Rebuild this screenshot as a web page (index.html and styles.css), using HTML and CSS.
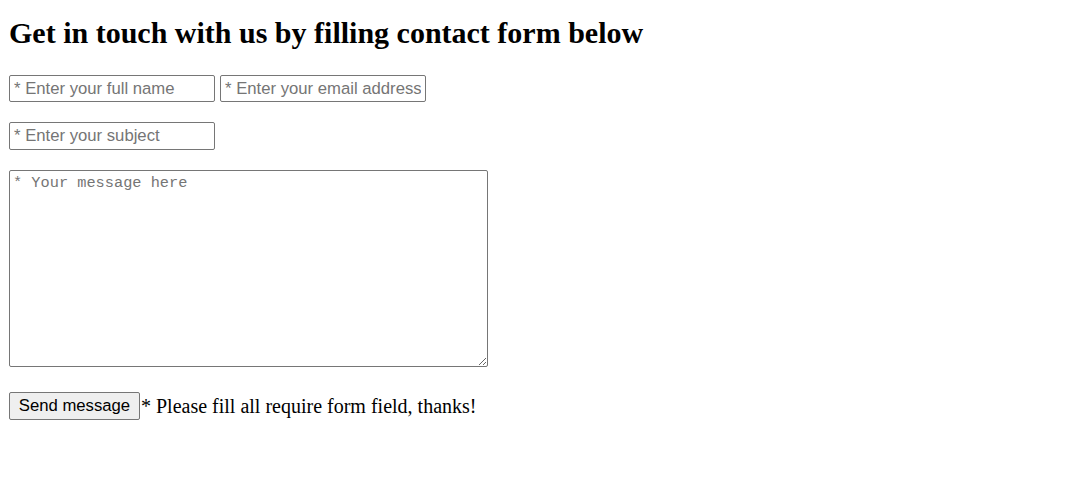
FILE: index.html
```html
<!DOCTYPE html>
<html lang="en">
<head>
<meta charset="utf-8">
<title>Contact</title>
<link rel="stylesheet" href="styles.css">
</head>
<body>
<main class="page">
  <h2 class="title">Get in touch with us by filling contact form below</h2>
  <form class="contact">
    <div class="row">
      <input class="field" type="text" placeholder="* Enter your full name">
      <input class="field" type="email" placeholder="* Enter your email address">
    </div>
    <div class="row">
      <input class="field" type="text" placeholder="* Enter your subject">
    </div>
    <textarea class="message" placeholder="* Your message here"></textarea>
    <div class="actions">
      <button class="send" type="button">Send message</button><span class="note">* Please fill all require form field, thanks!</span>
    </div>
  </form>
</main>
</body>
</html>
```

FILE: styles.css
```css
html, body {
  margin: 0;
  padding: 0;
  background: #ffffff;
}

.page {
  padding: 16px 9px 0 9px;
  font-family: "Liberation Serif", "Times New Roman", serif;
  color: #000;
}

.title {
  margin: 0;
  font-size: 30px;
  line-height: 34px;
  font-weight: bold;
}

.contact {
  margin-top: 25px;
  display: flex;
  flex-direction: column;
  align-items: flex-start;
  gap: 20px;
}

.row {
  display: flex;
  gap: 5px;
}

.field {
  box-sizing: border-box;
  width: 206px;
  height: 27px;
  margin: 0;
  padding: 0 4px;
  border: 1px solid #767676;
  border-radius: 2px;
  font-family: "Liberation Sans", Arial, sans-serif;
  font-size: 16.7px;
  color: #000;
  background: #fff;
}

.row + .row .field {
  height: 28px;
}

.field::placeholder,
.message::placeholder {
  color: #757575;
  opacity: 1;
}

.message {
  box-sizing: border-box;
  width: 479px;
  height: 197px;
  margin: 0;
  padding: 3px;
  border: 1px solid #767676;
  border-radius: 2px;
  font-family: "Liberation Mono", "Courier New", monospace;
  font-size: 15.3px;
  line-height: 19px;
  color: #000;
  background: #fff;
}

.actions {
  margin-top: 5px;
  display: flex;
  align-items: center;
}

.send {
  box-sizing: border-box;
  width: 131px;
  height: 28px;
  margin: 0 1px 0 0;
  padding: 0 8px;
  border: 1px solid #767676;
  border-radius: 2px;
  background: #efefef;
  font-family: "Liberation Sans", Arial, sans-serif;
  font-size: 16.7px;
  color: #000;
}

.note {
  font-size: 20px;
  line-height: 24px;
}
```
